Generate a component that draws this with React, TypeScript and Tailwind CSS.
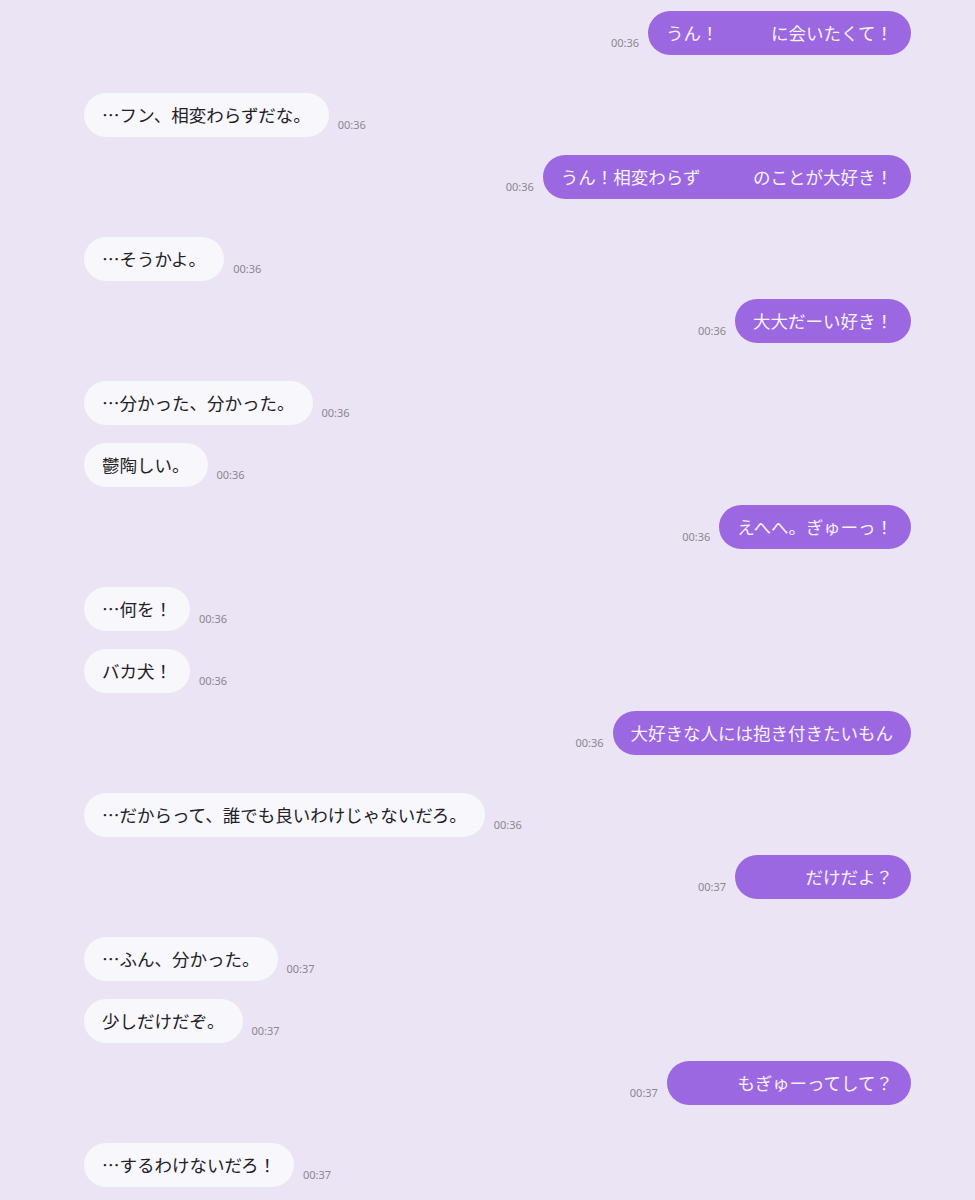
import React from "react";

type Msg = { me: boolean; text: string; time: string };

const S = "\u3000\u3000\u3000";

const messages: Msg[] = [
    { me: true, text: `うん！${S}に会いたくて！`, time: "00:36" },
    { me: false, text: "…フン、相変わらずだな。", time: "00:36" },
    { me: true, text: `うん！相変わらず${S}のことが大好き！`, time: "00:36" },
    { me: false, text: "…そうかよ。", time: "00:36" },
    { me: true, text: "大大だーい好き！", time: "00:36" },
    { me: false, text: "…分かった、分かった。", time: "00:36" },
    { me: false, text: "鬱陶しい。", time: "00:36" },
    { me: true, text: "えへへ。ぎゅーっ！", time: "00:36" },
    { me: false, text: "…何を！", time: "00:36" },
    { me: false, text: "バカ犬！", time: "00:36" },
    { me: true, text: "大好きな人には抱き付きたいもん", time: "00:36" },
    { me: false, text: "…だからって、誰でも良いわけじゃないだろ。", time: "00:36" },
    { me: true, text: `${S}だけだよ？`, time: "00:37" },
    { me: false, text: "…ふん、分かった。", time: "00:37" },
    { me: false, text: "少しだけだぞ。", time: "00:37" },
    { me: true, text: `${S}もぎゅーってして？`, time: "00:37" },
    { me: false, text: "…するわけないだろ！", time: "00:37" },
];

function Bubble({ msg }: { msg: Msg }) {
    const time = (
        <span className="mb-[5px] text-[11px] leading-[14px] text-[#8a878f] font-['Noto_Sans',sans-serif]">
            {msg.time}
        </span>
    );
    return (
        <div className={`flex items-end gap-[9px] ${msg.me ? "justify-end mb-[38px]" : "justify-start mb-[18px]"}`}>
            {msg.me && time}
            <div
                className={`h-[44px] flex items-center px-[18px] rounded-full whitespace-pre text-[17.5px] leading-[26px] font-['Noto_Sans_CJK_JP',sans-serif] ${
                    msg.me ? "bg-[#9c68e1] text-[#f7f2fd]" : "bg-[#f8f7fb] text-[#222126]"
                }`}
            >
                {msg.text}
            </div>
            {!msg.me && time}
        </div>
    );
}

export default function App() {
    return (
        <div className="w-[975px] h-[1200px] overflow-hidden bg-[#ebe4f4] pt-[11px] pl-[84px] pr-[64px]">
            {messages.map((m, i) => (
                <Bubble key={i} msg={m} />
            ))}
        </div>
    );
}
